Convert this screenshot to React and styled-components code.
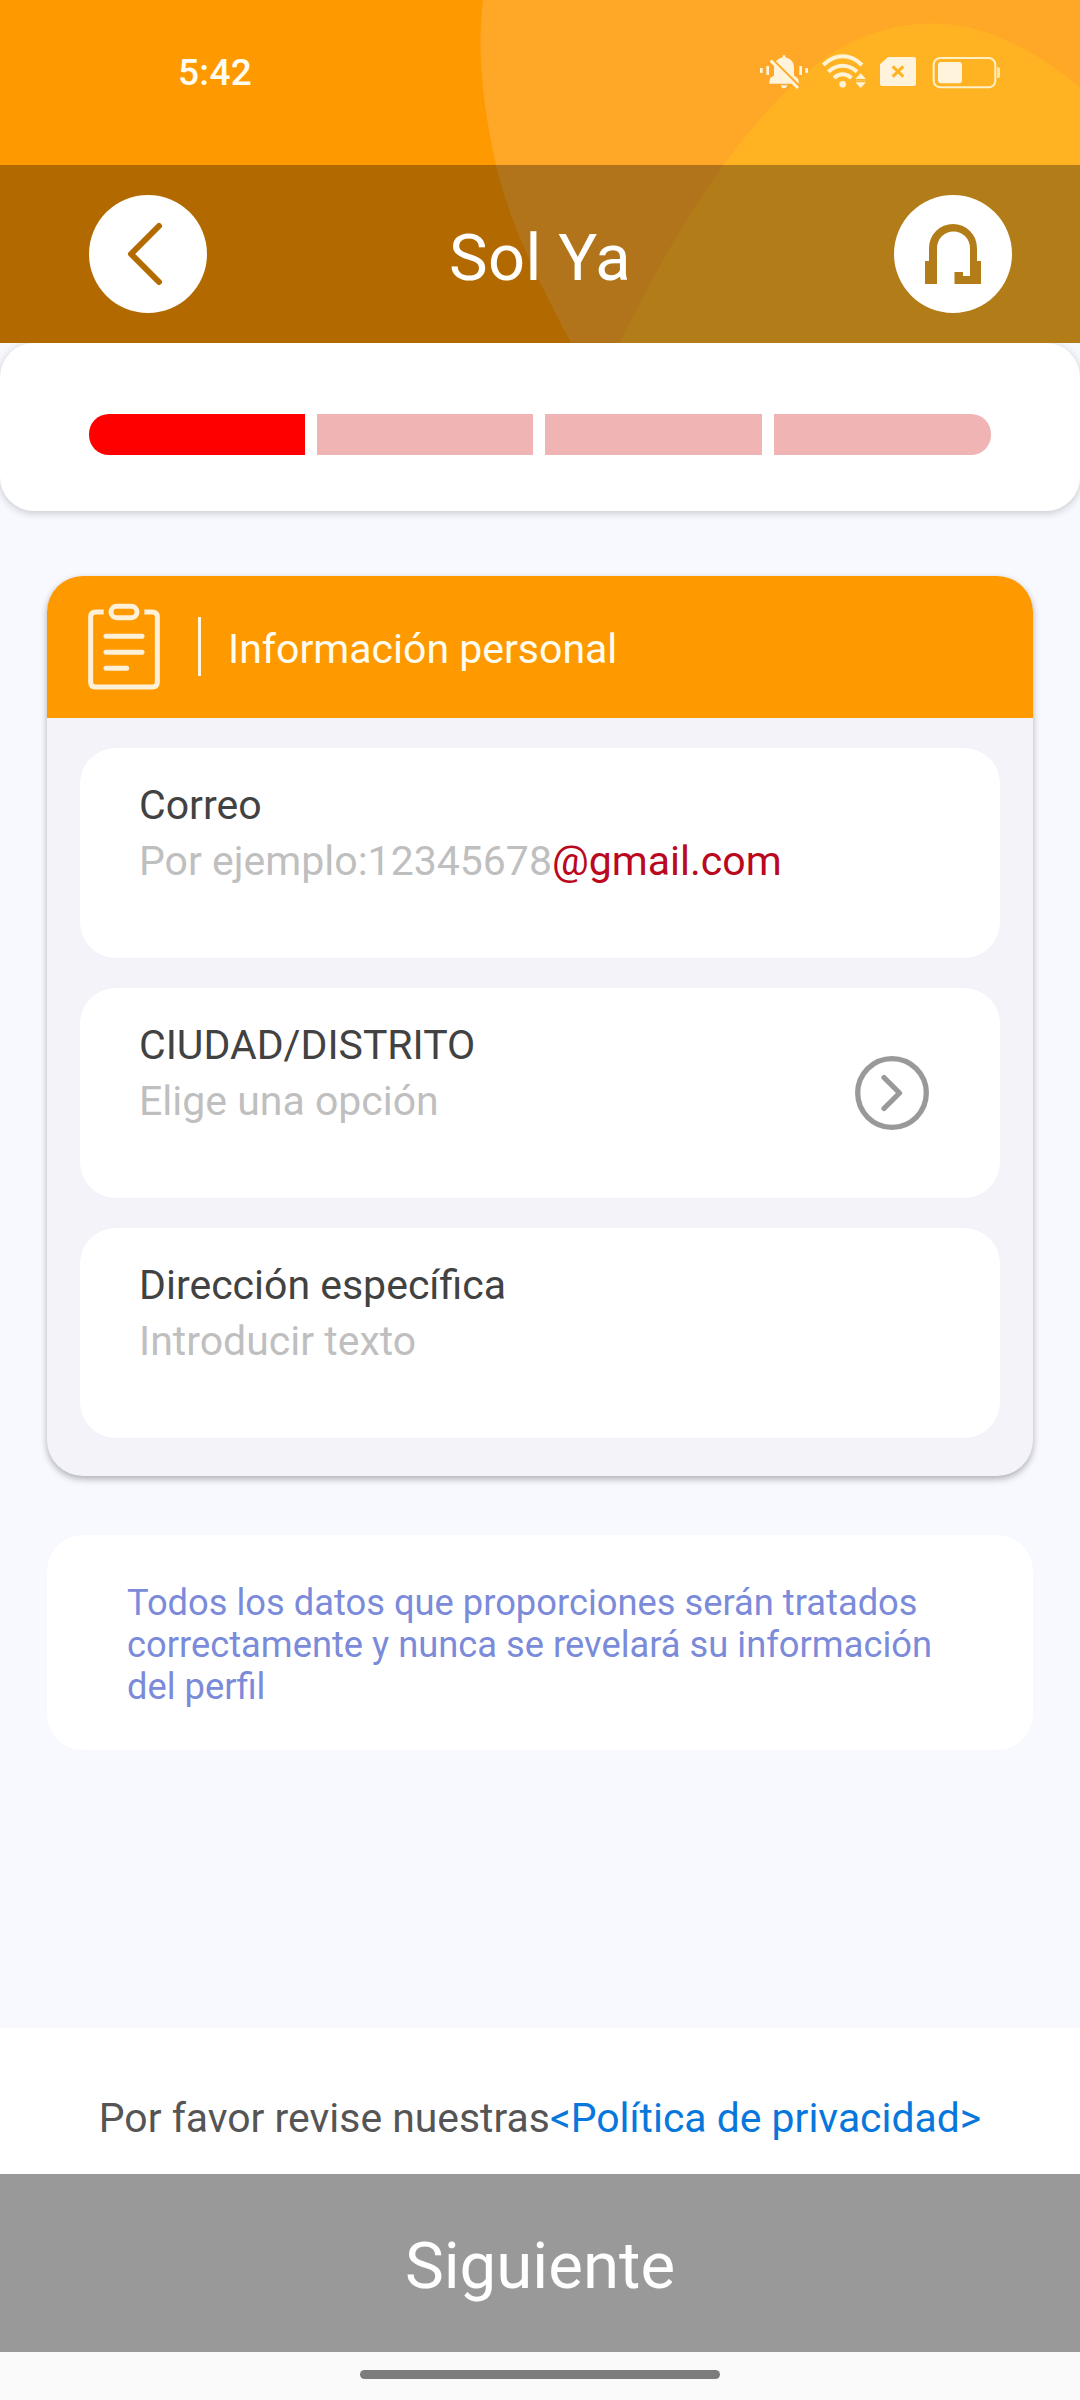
import React from 'react';
import styled, { createGlobalStyle } from 'styled-components';

const GlobalStyle = createGlobalStyle`
  * {
    box-sizing: border-box;
  }
  body {
    margin: 0;
    background: #f8f9ff;
    font-family: Roboto, "Noto Sans", sans-serif;
  }
  button {
    margin: 0;
    padding: 0;
    border: none;
    background: none;
    font: inherit;
  }
`

const Screen = styled.div`
  display: flex;
  flex-direction: column;
  width: 1080px;
  height: 2400px;
  overflow: hidden;
  background: #f8f9ff;
`

const Header = styled.header`
  position: relative;
  height: 343px;
  background: #ff9900;
`

const HeaderShapes = styled.svg`
  position: absolute;
  top: 0;
  left: 0;
`

const StatusBar = styled.div`
  position: relative;
  display: flex;
  justify-content: space-between;
  height: 165px;
  padding: 54px 80px 0 178px;
`

const Time = styled.span`
  font-size: 37px;
  line-height: 38px;
  font-weight: 500;
  letter-spacing: 0.3px;
  color: #fffdf2;
`

const StatusIcons = styled.div`
  display: flex;
  gap: 12px;
  height: 36px;
  svg {
    display: block;
    overflow: visible;
  }
`

const TitleBar = styled.div`
  position: relative;
  display: flex;
  align-items: center;
  justify-content: space-between;
  height: 178px;
  padding: 0 68px 0 89px;
  background: rgba(0, 0, 0, 0.3);
`

const RoundButton = styled.button`
  width: 118px;
  height: 118px;
  border-radius: 50%;
  background: white;
  color: ${props => props.$color};
  svg {
    display: block;
  }
`

const Title = styled.h1`
  margin: 0;
  padding: 7px 21px 0 0;
  font-size: 65px;
  line-height: 76px;
  font-weight: 400;
  letter-spacing: 0.4px;
  color: white;
`

const Progress = styled.div`
  display: grid;
  grid-template-columns: 216px 216px 217px 217px;
  gap: 12px;
  height: 168px;
  padding: 71px 89px 56px;
  border-radius: 34px;
  background: white;
  box-shadow: 0 2px 8px rgba(0, 0, 0, 0.2);
`

const Step = styled.div`
  background: ${props => props.$active ? '#ff0000' : '#f1b4b5'};
  &:first-child {
    border-radius: 20px 0 0 20px;
  }
  &:last-child {
    border-radius: 0 20px 20px 0;
  }
`

const Card = styled.section`
  margin: 65px 47px 0;
  height: 900px;
  border-radius: 36px;
  overflow: hidden;
  background: #f4f3f9;
  box-shadow: 0 3px 7px rgba(0, 0, 0, 0.3);
`

const CardHeader = styled.div`
  display: flex;
  align-items: center;
  height: 142px;
  padding: 0 0 2px 33px;
  background: #ff9900;
`

const Divider = styled.div`
  width: 3px;
  height: 59px;
  margin: 0 27px 0 28px;
  background: #fff6e0;
`

const CardTitle = styled.h2`
  margin: 0;
  padding-top: 5px;
  font-size: 41px;
  line-height: 48px;
  font-weight: 400;
  color: #fffdf0;
`

const Fields = styled.div`
  display: flex;
  flex-direction: column;
  gap: 30px;
  padding: 30px 33px 38px;
`

const FieldBox = styled.div`
  display: flex;
  align-items: flex-start;
  justify-content: space-between;
  height: 210px;
  padding: 29px 71px 0 59px;
  border-radius: 36px;
  background: white;
  font-size: 41px;
  line-height: 56px;
`

const Label = styled.div`
  color: #424242;
`

const Hint = styled.div`
  color: #bfbfbf;
`

const Domain = styled.span`
  color: #ba0820;
`

const PickIcon = styled.svg`
  margin-top: 39px;
`

const Notice = styled.p`
  height: 215px;
  margin: 59px 47px 0;
  padding: 47px 90px 0 80px;
  border-radius: 36px;
  background: white;
  font-size: 36.3px;
  line-height: 42px;
  color: #7b8bd9;
`

const Footer = styled.footer`
  margin-top: auto;
  background: white;
`

const Privacy = styled.div`
  height: 146px;
  padding-top: 66px;
  text-align: center;
  white-space: nowrap;
  font-size: 40.9px;
  line-height: 48px;
  color: #555;
`

const PrivacyLink = styled.span`
  color: #0877dc;
`

const NextButton = styled.button`
  display: block;
  width: 100%;
  height: 178px;
  padding-top: 5px;
  background: #999;
  color: white;
  font-size: 65.4px;
  line-height: 78px;
`

const NavBar = styled.div`
  display: flex;
  justify-content: center;
  height: 48px;
  padding-top: 18px;
  background: #fafafa;
`

const NavPill = styled.div`
  width: 360px;
  height: 9px;
  border-radius: 5px;
  background: #7c7c7c;
`

const BellOffIcon = () => (
  <svg width="50" height="36" viewBox="12 18 150 108" fill="#fff3dc">
    <path d="M15 60h8v15h-8zM34 54h8v27h-8zM133 54h8v27h-8zM151 60h8v15h-8z" />
    <path d="M83 22h8v6q26 6 26 32v23q14 5 14 18v6H43v-6q0-13 14-18V60q0-26 26-32z" />
    <path d="M77 112h20q-2 9-10 9t-10-9z" />
    <path d="M47 30L136 119" stroke="#ffab25" strokeWidth="9" />
    <path d="M47 38L129 120" stroke="#fff3dc" strokeWidth="9" />
    <path d="M36 38l18 18v18" stroke="#ffa726" strokeWidth="5" fill="none" />
  </svg>
)

const WifiIcon = () => (
  <svg width="46" height="36" viewBox="198 18 138 108" fill="none" stroke="#fff3d6" strokeWidth="12">
    <path d="M205 51Q232 25 263 25T321 51" />
    <path d="M220 71Q240 53 263 53T306 71" />
    <path d="M237 90Q249 79 263 79T289 90" />
    <circle cx="263" cy="109" r="10" fill="#fff3d6" stroke="none" />
    <path d="M317 76l16 17h-32zM317 120l16-17h-32z" fill="#fff3d6" stroke="none" />
    <path d="M303 98h28" strokeWidth="2" opacity="0.5" />
  </svg>
)

const SimIcon = () => (
  <svg width="41" height="36" viewBox="417 42 123 108">
    <path d="M444 51h78q6 0 6 6v75q0 6-6 6h-96q-6 0-6-6V73z" fill="#fff3dc" />
    <path d="M458 79l32 31M490 79l-32 31" stroke="#ffb323" strokeWidth="9" />
  </svg>
)

const BatteryIcon = () => (
  <svg width="68" height="36" viewBox="576 42 204 108">
    <rect x="581" y="54" width="185" height="88" rx="20" fill="none" stroke="#fff0c8" strokeWidth="6" />
    <rect x="594" y="66" width="72" height="64" rx="9" fill="#fff3dc" />
    <path d="M771 82h4q5 0 5 5v22q0 5-5 5h-4z" fill="#ffe6a8" />
  </svg>
)

const BackIcon = () => (
  <svg width="118" height="118" viewBox="0 0 118 118" fill="none" stroke="currentColor" strokeWidth="6" strokeLinecap="round" strokeLinejoin="round">
    <path d="M70 31L42 59l28 28" />
  </svg>
)

const HeadsetIcon = () => (
  <svg width="118" height="118" viewBox="0 0 118 118" fill="currentColor">
    <path d="M31 89V66h4V53a24 24 0 0 1 48 0v13h4v23H60.500V77H69v4h7V53a16.500 16.500 0 0 0-33 0v36z" />
  </svg>
)

const ClipboardIcon = () => (
  <svg width="90" height="100" viewBox="0 0 270 300" fill="none" stroke="#fff1d8" strokeWidth="15">
    <path d="M71 48H47q-15 0-15 15v196q0 14 14 14h171q15 0 15-15V63q0-15-15-15h-24" />
    <rect x="93" y="31" width="78" height="34" rx="17" />
    <path d="M78 121h108M78 169h108M78 217h62" strokeLinecap="round" />
  </svg>
)

const Field = ({label, icon, children}) => (
  <FieldBox>
    <div>
      <Label>{label}</Label>
      <Hint>{children}</Hint>
    </div>
    {icon}
  </FieldBox>
)

const chevron = (
  <PickIcon width="74" height="74" viewBox="0 0 74 74" fill="none" stroke="#999" strokeWidth="5.300">
    <circle cx="37" cy="37" r="34.300" />
    <path d="M29 21.500L44.500 37L29 52.500" strokeLinecap="round" strokeLinejoin="round" />
  </PickIcon>
)

const App = () => (
  <>
    <GlobalStyle />
    <Screen>
      <Header>
        <HeaderShapes width="1080" height="343" viewBox="0 0 1080 343">
          <path d="M483 0C478 40 480 95 496 165C508 215 528 262 571 343H1080V0z" fill="#ffa726" />
          <path d="M620 343C650 280 690 210 724 165C752 126 788 85 822 60C875 21 942 13 998 37C1030 50 1058 68 1080 88V343z" fill="#ffb323" />
        </HeaderShapes>
        <StatusBar>
          <Time>5:42</Time>
          <StatusIcons>
            <BellOffIcon />
            <WifiIcon />
            <SimIcon />
            <BatteryIcon />
          </StatusIcons>
        </StatusBar>
        <TitleBar>
          <RoundButton $color="#b36b00" aria-label="Volver"><BackIcon /></RoundButton>
          <Title>Sol Ya</Title>
          <RoundButton $color="#b27d18" aria-label="Ayuda"><HeadsetIcon /></RoundButton>
        </TitleBar>
      </Header>
      <Progress>
        <Step $active />
        <Step />
        <Step />
        <Step />
      </Progress>
      <Card>
        <CardHeader>
          <ClipboardIcon />
          <Divider />
          <CardTitle>Información personal</CardTitle>
        </CardHeader>
        <Fields>
          <Field label="Correo">Por ejemplo:12345678<Domain>@gmail.com</Domain></Field>
          <Field label="CIUDAD/DISTRITO" icon={chevron}>Elige una opción</Field>
          <Field label="Dirección específica">Introducir texto</Field>
        </Fields>
      </Card>
      <Notice>
        Todos los datos que proporciones serán tratados correctamente y nunca se revelará su información del perfil
      </Notice>
      <Footer>
        <Privacy>
          Por favor revise nuestras<PrivacyLink>&lt;Política de privacidad&gt;</PrivacyLink>
        </Privacy>
        <NextButton>Siguiente</NextButton>
        <NavBar>
          <NavPill />
        </NavBar>
      </Footer>
    </Screen>
  </>
)

export default App;
